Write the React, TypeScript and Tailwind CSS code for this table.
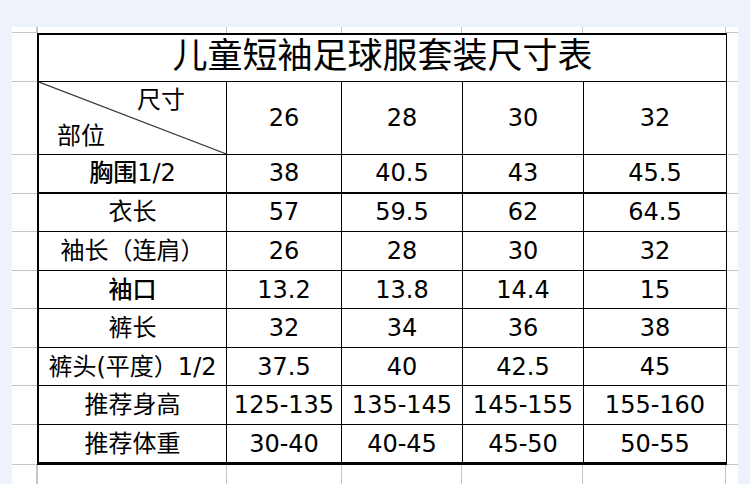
import React from "react";

type RowDef = {
  label: string;
  values: string[];
  h: string;
  bottom: string;
  labelBold?: boolean;
};

const cellW = ["w-[190px]", "w-[115px]", "w-[121px]", "w-[121px]", "w-[143px]"];

const rows: RowDef[] = [
  { label: "胸围1/2", values: ["38", "40.5", "43", "45.5"], h: "h-[39px]", bottom: "border-b-2", labelBold: true },
  { label: "衣长", values: ["57", "59.5", "62", "64.5"], h: "h-[38px]", bottom: "border-b" },
  { label: "袖长（连肩）", values: ["26", "28", "30", "32"], h: "h-[40px]", bottom: "border-b" },
  { label: "袖口", values: ["13.2", "13.8", "14.4", "15"], h: "h-[38px]", bottom: "border-b", labelBold: true },
  { label: "裤长", values: ["32", "34", "36", "38"], h: "h-[39px]", bottom: "border-b" },
  { label: "裤头(平度）1/2", values: ["37.5", "40", "42.5", "45"], h: "h-[38px]", bottom: "border-b" },
  { label: "推荐身高", values: ["125-135", "135-145", "145-155", "155-160"], h: "h-[39px]", bottom: "border-b" },
  { label: "推荐体重", values: ["30-40", "40-45", "45-50", "50-55"], h: "h-[40px]", bottom: "border-b-[3px]" },
];

function GridStrip({ h, bottomLine }: { h: string; bottomLine?: boolean }) {
  const line = bottomLine ? "border-b border-[#c6c6c6]" : "";
  return (
    <div className={`flex ${h}`}>
      <div className={`w-[25px] border-r border-[#c6c6c6] ${line}`} />
      {cellW.map((w, i) => (
        <div key={i} className={`${w} ${i === 0 ? "border-l border-l-[#c6c6c6]" : ""} border-r border-[#c6c6c6]`} />
      ))}
      <div className={`w-[12px] ${line}`} />
    </div>
  );
}

export default function App() {
  return (
    <div
      className="w-[750px] h-[484px] overflow-hidden bg-[#eef2fb] pt-[27px] pl-[12px] text-black"
      style={{ fontFamily: '"DejaVu Sans", "Noto Sans CJK SC", sans-serif' }}
    >
      <div className="w-[726px] h-[457px] bg-white flex flex-col">
        <GridStrip h="h-[6px]" bottomLine />

        {/* title */}
        <div className="flex h-[49px]">
          <div className="w-[25px] border-b border-[#c6c6c6]" />
          <div className="w-[690px] border-t-2 border-l-2 border-r border-b border-black flex items-center justify-center text-[35px] leading-none pb-[2px]">
            儿童短袖足球服套装尺寸表
          </div>
          <div className="w-[11px] border-b border-[#c6c6c6]" />
        </div>

        {/* header */}
        <div className="flex h-[73px]">
          <div className="w-[25px] border-b border-[#c6c6c6]" />
          <div className="w-[190px] relative border-l-2 border-r border-b border-black text-[24px] leading-none">
            <svg className="absolute inset-0 w-full h-full" preserveAspectRatio="none" viewBox="0 0 100 100">
              <line x1="0" y1="0" x2="100" y2="100" stroke="#3a3a3a" strokeWidth="1.2" vectorEffect="non-scaling-stroke" />
            </svg>
            <span className="absolute left-[98px] top-[6px]">尺寸</span>
            <span className="absolute left-[18px] top-[42px]">部位</span>
          </div>
          {["26", "28", "30", "32"].map((v, i) => (
            <div
              key={v}
              className={`${cellW[i + 1]} border-r border-b border-black flex items-center justify-center text-[24px] leading-none`}
            >
              {v}
            </div>
          ))}
          <div className="w-[11px] border-b border-[#c6c6c6]" />
        </div>

        {rows.map((r) => (
          <div key={r.label} className={`flex ${r.h}`}>
            <div className="w-[25px] border-b border-[#c6c6c6]" />
            <div
              className={`w-[190px] border-l-2 border-r ${r.bottom} border-black flex items-center justify-center text-[24px] leading-none whitespace-nowrap ${
                r.labelBold ? "font-medium" : ""
              }`}
            >
              {r.label}
            </div>
            {r.values.map((v, i) => (
              <div
                key={i}
                className={`${cellW[i + 1]} border-r ${r.bottom} border-black flex items-center justify-center text-[24px] leading-none whitespace-nowrap`}
              >
                {v}
              </div>
            ))}
            <div className="w-[11px] border-b border-[#c6c6c6]" />
          </div>
        ))}

        <GridStrip h="h-[19px]" />
      </div>
    </div>
  );
}
